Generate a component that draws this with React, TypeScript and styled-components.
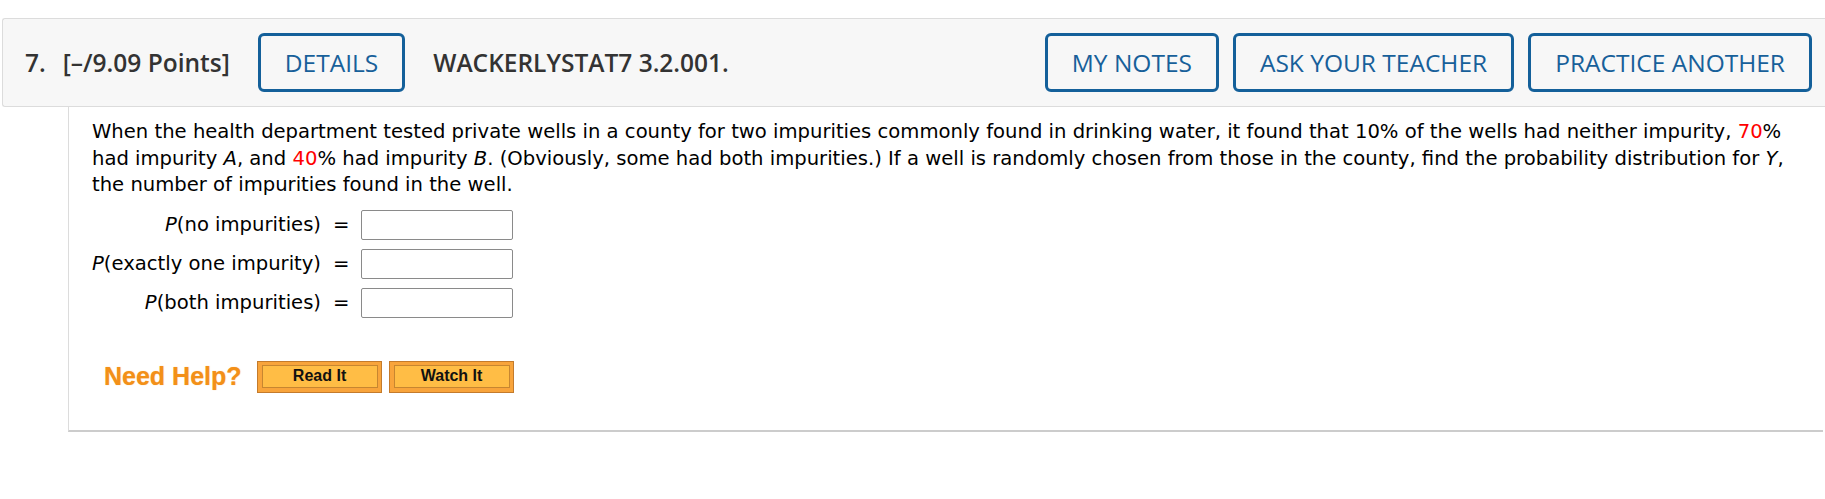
import styled, { createGlobalStyle } from 'styled-components';

const GlobalStyle = createGlobalStyle`
	body {
		margin: 0;
		background: #ffffff;
	}
	* {
		box-sizing: border-box;
	}
`;

const Page = styled.div`
	padding: 18px 0 0 2px;
	width: 1825px;
`;

const QuestionHeader = styled.div`
	display: flex;
	align-items: center;
	height: 89px;
	padding: 0 13px 0 22px;
	background: #f7f7f7;
	border: 1px solid #dcdcdc;
	border-right: none;
	border-radius: 3px 0 0 3px;
	font-family: 'Open Sans', 'Liberation Sans', sans-serif;
	color: #333333;
`;

const HeaderText = styled.span<{ $gap: number }>`
	font-size: 24.5px;
	font-weight: 600;
	white-space: nowrap;
	margin-right: ${(p) => p.$gap}px;
`;

const Spacer = styled.div`
	flex: 1;
`;

const ButtonGroup = styled.div`
	display: flex;
	gap: 14px;
`;

const OutlineButton = styled.button<{ $gap?: number }>`
	height: 59px;
	padding: 0 24px;
	margin-right: ${(p) => p.$gap || 0}px;
	background: transparent;
	border: 3px solid #14609a;
	border-radius: 6px;
	color: #17609a;
	font-family: 'Open Sans', 'Liberation Sans', sans-serif;
	font-size: 24.5px;
	font-weight: 400;
	white-space: nowrap;
	cursor: pointer;
`;

const QuestionBody = styled.div`
	margin: 0 2px 0 66px;
	padding: 12px 30px 37px 23px;
	border-left: 1px solid #dcdcdc;
	border-bottom: 2px solid #cccccc;
	font-family: 'DejaVu Sans', Verdana, sans-serif;
	font-size: 19.6px;
	color: #000000;
`;

const Prompt = styled.p`
	margin: 0;
	line-height: 26.5px;
`;

const Red = styled.span`
	color: #ff0000;
`;

const AnswerGrid = styled.div`
	display: grid;
	grid-template-columns: auto auto auto;
	justify-content: start;
	align-items: center;
	column-gap: 10px;
	row-gap: 9px;
	margin-top: 11px;
`;

const Label = styled.span`
	justify-self: end;
	white-space: nowrap;
`;

const Equals = styled.span`
	padding: 0 2px;
`;

const AnswerInput = styled.input`
	width: 152px;
	height: 30px;
	border: 1px solid #8a8a8a;
	border-radius: 2px;
	background: #ffffff;
`;

const HelpRow = styled.div`
	display: flex;
	align-items: center;
	gap: 7px;
	margin-top: 43px;
	padding-left: 12px;
`;

const NeedHelp = styled.span`
	font-family: 'Liberation Sans', Arial, sans-serif;
	font-size: 25px;
	font-weight: 700;
	color: #f39018;
	text-shadow: 0 0 1px rgba(243, 144, 24, 0.6);
	margin-right: 8px;
`;

const HelpButton = styled.button`
	width: 125px;
	height: 32px;
	border: 1px solid #c47b2c;
	background: #f8a43b;
	cursor: pointer;
	display: flex;
	align-items: stretch;
	padding: 3px 3px 4px 4px;
	span {
		flex: 1;
		display: flex;
		align-items: center;
		justify-content: center;
		border: 1px solid #c78630;
		background: #ffbd45;
		font-family: 'Liberation Sans', Arial, sans-serif;
		font-size: 16px;
		font-weight: 700;
		color: #111111;
	}
`;

export default function App() {
	return (
		<Page>
			<GlobalStyle />
			<QuestionHeader>
				<HeaderText $gap={17}>7.</HeaderText>
				<HeaderText $gap={28}>[–/9.09 Points]</HeaderText>
				<OutlineButton $gap={28}>DETAILS</OutlineButton>
				<HeaderText $gap={0}>WACKERLYSTAT7 3.2.001.</HeaderText>
				<Spacer />
				<ButtonGroup>
					<OutlineButton>MY NOTES</OutlineButton>
					<OutlineButton>ASK YOUR TEACHER</OutlineButton>
					<OutlineButton>PRACTICE ANOTHER</OutlineButton>
				</ButtonGroup>
			</QuestionHeader>
			<QuestionBody>
				<Prompt>
					When the health department tested private wells in a county for two impurities
					commonly found in drinking water, it found that 10% of the wells had neither
					impurity, <Red>70</Red>% had impurity <i>A</i>, and <Red>40</Red>% had impurity{' '}
					<i>B</i>. (Obviously, some had both impurities.) If a well is randomly chosen from
					those in the county, find the probability distribution for <i>Y</i>, the number of
					impurities found in the well.
				</Prompt>
				<AnswerGrid>
					<Label>
						<i>P</i>(no impurities)
					</Label>
					<Equals>=</Equals>
					<AnswerInput type="text" />
					<Label>
						<i>P</i>(exactly one impurity)
					</Label>
					<Equals>=</Equals>
					<AnswerInput type="text" />
					<Label>
						<i>P</i>(both impurities)
					</Label>
					<Equals>=</Equals>
					<AnswerInput type="text" />
				</AnswerGrid>
				<HelpRow>
					<NeedHelp>Need Help?</NeedHelp>
					<HelpButton>
						<span>Read It</span>
					</HelpButton>
					<HelpButton>
						<span>Watch It</span>
					</HelpButton>
				</HelpRow>
			</QuestionBody>
		</Page>
	);
}
